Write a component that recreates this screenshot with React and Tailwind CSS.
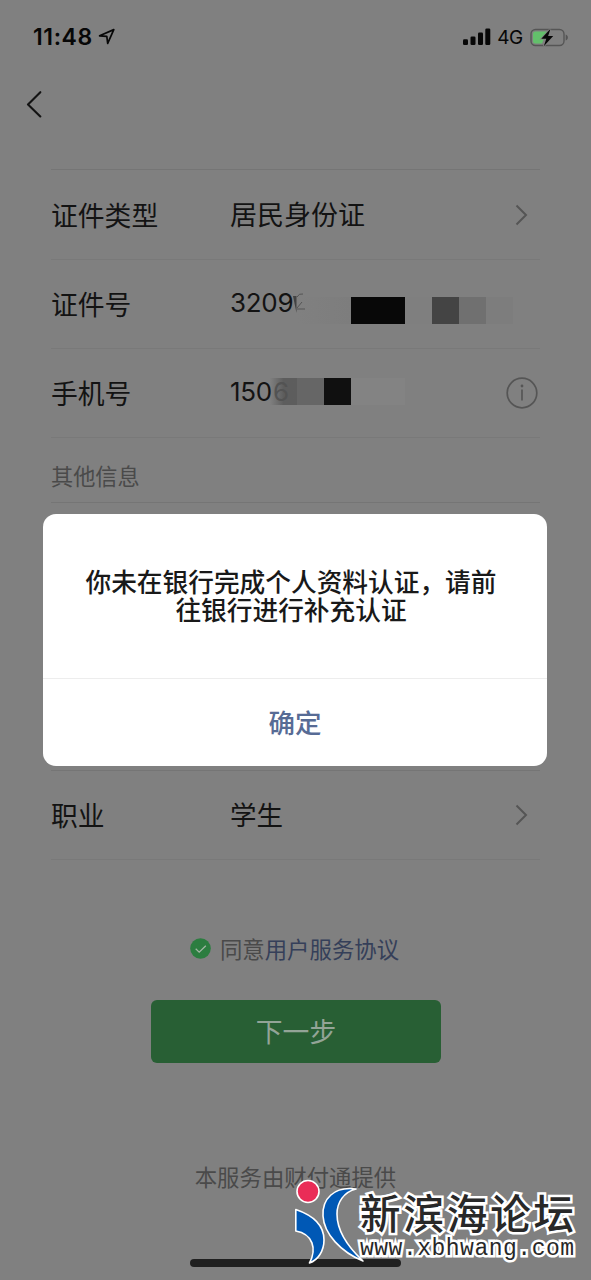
const StatusBar = () => (
  <div className="h-[74px] pl-[33px] pr-[22px] flex items-center justify-between text-[#070707]">
    <div className="flex items-center gap-[5px]">
      <span className="font-['Inter'] font-semibold text-[23px] leading-none tracking-[0.6px]">11:48</span>
      <svg width="18" height="18" viewBox="0 0 18 18" fill="none" stroke="currentColor" strokeWidth="1.7" strokeLinejoin="round">
        <path d="M1.6 7.8 L15.8 1.6 L9.7 15.4 L8.8 8.4 Z" />
      </svg>
    </div>
    <div className="flex items-center">
      <svg width="28" height="18" viewBox="0 0 28 18" fill="currentColor">
        <rect x="0" y="11.3" width="5" height="5.7" rx="1.3" />
        <rect x="7.5" y="8.5" width="5" height="8.5" rx="1.3" />
        <rect x="15" y="4.5" width="5" height="12.5" rx="1.3" />
        <rect x="22.3" y="0.5" width="5" height="16.5" rx="1.3" />
      </svg>
      <span className="ml-[6px] font-['Inter'] text-[19px] leading-none tracking-[-0.3px]">4G</span>
      <svg className="ml-[7px]" width="39" height="19" viewBox="0 0 39 19" fill="none">
        <rect x="1" y="1.5" width="33" height="16" rx="4.5" stroke="#555" strokeWidth="1.4" />
        <path d="M35.7 6.5 C38.6 7.5 38.6 11.5 35.7 12.5 Z" fill="#555" />
        <path d="M5.5 3.5 H17 L12 15.5 H5.5 A2.5 2.5 0 0 1 3 13 V6 A2.5 2.5 0 0 1 5.5 3.5 Z" fill="#63bf6b" />
        <path d="M20.5 0.8 L11.3 10.8 H16.3 L13.8 18.3 L23.2 8.1 H18.1 Z" fill="#070707" stroke="#808080" strokeWidth="1.6" paintOrder="stroke" />
      </svg>
    </div>
  </div>
);

const Chevron = () => (
  <svg className="mr-[12px] mb-px shrink-0" width="13" height="22" viewBox="0 0 13 22" fill="none" stroke="#555" strokeWidth="2">
    <path d="M1.5 1.5 L11 11 L1.5 20.5" />
  </svg>
);

const Row = ({ label, value, first, children }) => (
  <div className={`${first ? 'h-[90px]' : 'h-[89px]'} pt-px border-b border-[#797979] flex items-center text-[#131313]`}>
    <span className="w-[179px] shrink-0 text-[26.8px] leading-none">{label}</span>
    <span className="grow text-[27px] leading-none relative -top-[2px]">{value}</span>
    {children}
  </div>
);

const Dialog = () => (
  <div className="absolute left-[43px] top-[514px] w-[504px] h-[252px] rounded-[13px] bg-white flex flex-col">
    <div className="h-[164px] pt-[53px] pr-[8px] flex flex-col items-center font-medium text-[25.7px] leading-[28px] text-[#191919] whitespace-nowrap">
      <p>你未在银行完成个人资料认证，请前</p>
      <p>往银行进行补充认证</p>
    </div>
    <button className="grow pb-[2px] border-t border-[#ededed] font-medium text-[26.5px] text-[#576b95]">确定</button>
  </div>
);

const Watermark = () => (
  <div className="absolute left-[293px] top-[1177px] flex text-[#282828]">
    <svg width="72" height="88" viewBox="0 0 72 88" stroke="#fff" strokeWidth="1.6" strokeLinejoin="round">
      <circle cx="15" cy="14.5" r="11" fill="#ea2c57" />
      <path d="M2.8 32.5 C22 39 31 49 31 63 C31 74 25 83 16.5 86 C24 72 20 57 2.8 54 Z" fill="#0058b5" />
      <path d="M63 12 C41 9 29 22 30 39 C31 57 48 75 70 84 C55 70 44 53 44 37 C44 25 51 15 63 12 Z" fill="#0058b5" />
    </svg>
    <div className="-ml-[5px] pt-[13px] whitespace-nowrap [-webkit-text-stroke:5px_white] [paint-order:stroke_fill]">
      <div className="font-medium text-[40.5px] leading-[43px] tracking-[2.9px]">新滨海论坛</div>
      <div className="mt-[3px] font-['Liberation_Mono'] text-[23px] leading-[26px] tracking-[0.5px]">www.xbhwang.com</div>
    </div>
  </div>
);

const App = () => {
  return (
    <div className="relative w-[591px] h-[1280px] overflow-hidden bg-[#808080] font-['Noto_Sans_CJK_SC',sans-serif]">
      <StatusBar />
      <div className="h-[95px] pl-[26px] pt-[17px]">
        <svg width="17" height="27" viewBox="0 0 17 27" fill="none" stroke="#131313" strokeWidth="2.1" strokeLinecap="round" strokeLinejoin="round">
          <path d="M14.3 1.2 L2 13.5 L14.3 25.5" />
        </svg>
      </div>

      <div className="mx-[51px] border-t border-[#757575]">
        <Row label="证件类型" value="居民身份证" first>
          <Chevron />
        </Row>
        <Row
          label="证件号"
          value={
            <span className="flex items-center">
              <span className="font-['Inter'] w-[67px] text-[26px] tracking-[-0.3px]">3209</span>
              <span className="relative top-[8px] flex h-[27px]">
                <span className="w-[54px] bg-linear-to-r from-[#808080] to-[#7d7d7d]" />
                <span className="w-[54px] bg-[#080808]" />
                <span className="w-[27px] bg-[#7f7f7f]" />
                <span className="w-[27px] bg-[#444]" />
                <span className="w-[27px] bg-[#707070]" />
                <span className="w-[27px] bg-[#7d7d7d]" />
              </span>
              {/* half hidden fifth digit */}
              <svg className="absolute left-[61px] top-0" width="16" height="28" viewBox="0 0 16 28">
                <path d="M2 7 H5.5 V24 Z" fill="#333" opacity="0.8" />
                <path d="M6 8 Q8 4 12 5 M6 19 L11 13 M6 20 H14" stroke="#555" fill="none" />
              </svg>
            </span>
          }
        />
        <Row
          label="手机号"
          value={
            <span className="flex items-center">
              <span className="font-['Inter'] w-[40px] text-[26px] tracking-[-0.3px]">150</span>
              <span className="flex h-[27px]">
                <span className="w-[27px] bg-linear-to-r from-[#80808000] to-[#5d5d5d] to-50%" />
                <span className="w-[27px] bg-[#666]" />
                <span className="w-[27px] bg-[#101010]" />
                <span className="w-[54px] bg-[#838383]" />
              </span>
              {/* faint digit showing through the first block */}
              <span className="absolute left-[43px] font-['Inter'] text-[26px] text-[#535353]">6</span>
            </span>
          }
        >
          <svg className="mr-[2px] mb-px shrink-0" width="32" height="32" viewBox="0 0 32 32" fill="none" stroke="#555" strokeWidth="1.7">
            <circle cx="16" cy="16" r="14.8" />
            <path d="M16 12.5 V23.5" />
            <circle cx="16" cy="9" r="1.4" fill="#555" stroke="none" />
          </svg>
        </Row>
        <div className="h-[65px] pt-[11px] border-b border-[#757575] flex items-center text-[22.2px] text-[#4a4a4a]">其他信息</div>
        <div className="h-[268px] border-b border-[#757575]" />
        <Row label="职业" value={<span className="text-[26.5px]">学生</span>}>
          <Chevron />
        </Row>
      </div>

      <div className="mt-[71px] mr-[2px] h-[34px] flex items-center justify-center gap-[9px] text-[22.4px] leading-none">
        <svg width="21" height="21" viewBox="0 0 21 21" fill="none">
          <circle cx="10.5" cy="10.5" r="10.3" fill="#2c7d40" />
          <path d="M5.7 10.8 L9.2 14.2 L15.8 7.7" stroke="#a3b7a6" strokeWidth="1.3" />
        </svg>
        <span className="text-[#4a4a4a]">
          同意<span className="text-[#353f59]">用户服务协议</span>
        </span>
      </div>
      <button className="block mt-[35px] ml-[151px] w-[290px] h-[63px] rounded-[6px] bg-[#285f34] text-[#93a497] text-[26.8px]">
        下一步
      </button>
      <div className="mt-[96px] text-center text-[22.4px] leading-[34px] text-[#4a4a4a]">本服务由财付通提供</div>
      <div className="mt-[66px] ml-[190px] w-[211px] h-[8px] rounded-full bg-[#202020]" />

      <Dialog />
      <Watermark />
    </div>
  );
};

export default App;
